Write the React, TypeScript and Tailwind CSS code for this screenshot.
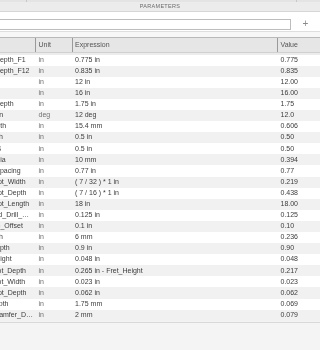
import React from "react";

type Param = {
  name: string;
  unit: string;
  expr: string;
  value: string;
};

const params: Param[] = [
  { name: "Neck_Depth_F1", unit: "in", expr: "0.775 in", value: "0.775" },
  { name: "Neck_Depth_F12", unit: "in", expr: "0.835 in", value: "0.835" },
  { name: "Rad_1", unit: "in", expr: "12 in", value: "12.00" },
  { name: "Rad_2", unit: "in", expr: "16 in", value: "16.00" },
  { name: "Body_Depth", unit: "in", expr: "1.75 in", value: "1.75" },
  { name: "Tilt_Main", unit: "deg", expr: "12 deg", value: "12.0" },
  { name: "Lip_Width", unit: "in", expr: "15.4 mm", value: "0.606" },
  { name: "Shim_Th", unit: "in", expr: "0.5 in", value: "0.50" },
  { name: "Wall_TS", unit: "in", expr: "0.5 in", value: "0.50" },
  { name: "Knob_Dia", unit: "in", expr: "10 mm", value: "0.394" },
  { name: "Knob_Spacing", unit: "in", expr: "0.77 in", value: "0.77" },
  { name: "Rod_Slot_Width", unit: "in", expr: "( 7 / 32 ) * 1 in", value: "0.219" },
  { name: "Rod_Slot_Depth", unit: "in", expr: "( 7 / 16 ) * 1 in", value: "0.438" },
  { name: "Rod_Slot_Length", unit: "in", expr: "18 in", value: "18.00" },
  { name: "Nut_Pad_Drill_Width", unit: "in", expr: "0.125 in", value: "0.125" },
  { name: "Tremolo_Offset", unit: "in", expr: "0.1 in", value: "0.10" },
  { name: "Plate_Th", unit: "in", expr: "6 mm", value: "0.236" },
  { name: "Bolt_Depth", unit: "in", expr: "0.9 in", value: "0.90" },
  { name: "Fret_Height", unit: "in", expr: "0.048 in", value: "0.048" },
  { name: "Fret_Slot_Depth", unit: "in", expr: "0.265 in - Fret_Height", value: "0.217" },
  { name: "Fret_Slot_Width", unit: "in", expr: "0.023 in", value: "0.023" },
  { name: "Side_Dot_Depth", unit: "in", expr: "0.062 in", value: "0.062" },
  { name: "Nut_Depth", unit: "in", expr: "1.75 mm", value: "0.069" },
  { name: "Top_Chamfer_Distance", unit: "in", expr: "2 mm", value: "0.079" },
];

export default function App() {
  return (
    <div className="w-[320px] h-[350px] overflow-hidden bg-[#f3f3f3] flex flex-col will-change-transform font-['Liberation_Sans',Arial,sans-serif] text-[7px] text-[#3a3a3a]">
      {/* tab strip */}
      <div className="h-[2px] flex bg-[#e4e4e4]">
        <div className="w-[27px] border-r border-[#c8c8c8]" />
        <div className="w-[270px] border-r border-[#c8c8c8]" />
      </div>

      {/* panel title */}
      <div className="h-[10px] flex items-center justify-center bg-[#ececec] border-b border-[#d6d6d6] text-[5.5px] tracking-[0.3px] text-[#6a6a6a]">
        PARAMETERS
      </div>

      {/* search row */}
      <div className="h-[20px] flex items-end pb-[1.5px] bg-white border-b border-[#dedede]">
        <div className="ml-[-10px] w-[301px] h-[11px] border border-[#bdbdbd] bg-white" />
        <div className="flex-1 h-[11px] flex items-center justify-center text-[10px] leading-none text-[#8a8a8a]">+</div>
      </div>

      <div className="h-[5px] bg-[#f7f7f7]" />

      {/* table */}
      <div className="ml-[-30px] w-[350px] flex flex-col">
        <div className="h-[16px] grid grid-cols-[65.5px_37px_205.5px_1fr] items-stretch bg-[#e6e6e6] border-t border-[#b9b9b9] border-b border-b-[#d0d0d0] text-[#555]">
          <div className="border-r border-[#9a9a9a]" />
          <div className="border-r border-[#9a9a9a] pl-[3px] flex items-center">Unit</div>
          <div className="border-r border-[#9a9a9a] pl-[2.5px] flex items-center">Expression</div>
          <div className="pl-[2.5px] flex items-center">Value</div>
        </div>
        <div className="h-[1.5px] bg-[#ececec]" />

        {params.map((p, i) => (
          <div
            key={p.name}
            className={`h-[11.1px] grid grid-cols-[65.5px_37px_205.5px_1fr] items-center ${
              i % 2 === 1 ? "bg-[#f1f1f1]" : "bg-white"
            }`}
          >
            <div className="pl-[5px] pr-[1.5px] overflow-hidden whitespace-nowrap text-ellipsis text-[#3c3c3c]">
              {p.name}
            </div>
            <div className="pl-[3px] whitespace-nowrap text-[#707070]">{p.unit}</div>
            <div className="pl-[2.5px] whitespace-nowrap text-[#3c3c3c]">{p.expr}</div>
            <div className="pl-[2.5px] whitespace-nowrap text-[#3c3c3c]">{p.value}</div>
          </div>
        ))}
      </div>

      {/* empty area under table */}
      <div className="flex-1 border-t border-[#d8d8d8] mt-[1px] bg-[#f4f4f4]" />
    </div>
  );
}
